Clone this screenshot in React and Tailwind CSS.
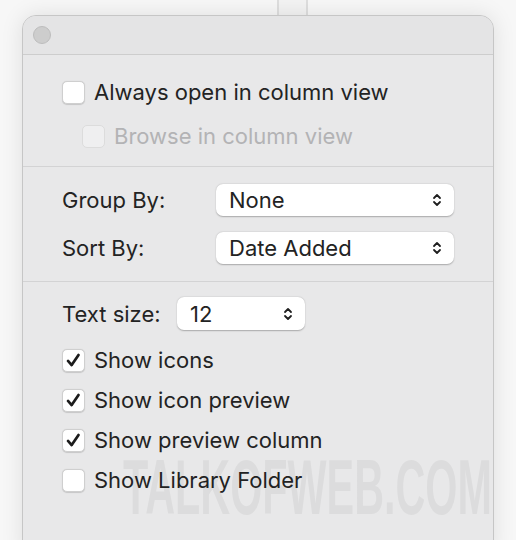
import React from "react";

const font = { fontFamily: "Inter, 'Noto Sans', sans-serif" };

function Chevrons() {
  return (
    <svg width="10" height="16" viewBox="0 0 10 16" fill="none">
      <path d="M2 6 L5 3 L8 6" stroke="#1f1f1f" strokeWidth="1.8" strokeLinecap="round" strokeLinejoin="round" />
      <path d="M2 10 L5 13 L8 10" stroke="#1f1f1f" strokeWidth="1.8" strokeLinecap="round" strokeLinejoin="round" />
    </svg>
  );
}

function Checkbox({ checked, disabled }) {
  return (
    <div
      className={
        "w-[23px] h-[23px] rounded-[5px] flex items-center justify-center shrink-0 " +
        (disabled
          ? "bg-[#efeff0] border border-[#dcdcdc]"
          : "bg-white border border-[#cfcfcf] shadow-[0_0.5px_1px_rgba(0,0,0,0.15)]")
      }
    >
      {checked && (
        <svg width="23" height="23" viewBox="0 0 23 23" fill="none">
          <path d="M5.5 12 L9.5 16.5 L17 5.5" stroke="#1c1c1c" strokeWidth="3" strokeLinecap="round" strokeLinejoin="round" />
        </svg>
      )}
    </div>
  );
}

function CheckRow({ label, checked, disabled, className = "" }) {
  return (
    <div className={"flex items-center h-[24px] " + className}>
      <Checkbox checked={checked} disabled={disabled} />
      <span className={"ml-[9px] text-[22px] leading-none " + (disabled ? "text-[#b3b3b5]" : "text-[#232323]")}>
        {label}
      </span>
    </div>
  );
}

function Select({ value, className = "" }) {
  return (
    <div
      className={
        "bg-white rounded-[7px] flex items-center justify-between pl-[13px] pr-[12px] shadow-[0_0.5px_1.5px_rgba(0,0,0,0.28)] " +
        className
      }
    >
      <span className="text-[22px] leading-none text-[#232323]">{value}</span>
      <Chevrons />
    </div>
  );
}

export default function App() {
  return (
    <div className="relative w-[516px] h-[540px] overflow-hidden bg-[#f7f7f7]" style={font}>
      <div className="h-[15px] flex">
        <div className="ml-[277px] w-[31px] h-full border-x-2 border-[#dedede] bg-[#f3f3f3]" />
      </div>
      <div className="relative ml-[22px] w-[472px] h-[540px] rounded-t-[14px] border border-[#c6c6c6] bg-[#e8e8e9] shadow-[0_0_22px_rgba(0,0,0,0.10)]">
        <div className="h-[39px] rounded-t-[13px] bg-[#e4e4e5] border-b border-[#cdcdcd] flex items-center pl-[10px]">
          <div className="w-[18px] h-[18px] rounded-full bg-[#cdcdcd] border border-[#bdbdbd]" />
        </div>
        <div className="pl-[39px] pt-[25px] pb-[18px] border-b border-[#d3d3d4]">
          <CheckRow label="Always open in column view" />
          <CheckRow label="Browse in column view" disabled className="ml-[20px] mt-[20px]" />
        </div>
        <div className="pl-[39px] pt-[17px] pb-[17px] border-b border-[#d3d3d4]">
          <div className="flex items-center">
            <span className="w-[154px] text-[22px] leading-none text-[#232323]">Group By:</span>
            <Select value="None" className="w-[238px] h-[32px]" />
          </div>
          <div className="flex items-center mt-[16px]">
            <span className="w-[154px] text-[22px] leading-none text-[#232323]">Sort By:</span>
            <Select value="Date Added" className="w-[238px] h-[32px]" />
          </div>
        </div>
        <div className="pl-[39px] pt-[15px]">
          <div className="flex items-center">
            <span className="w-[115px] text-[22px] leading-none text-[#232323]">Text size:</span>
            <Select value="12" className="w-[128px] h-[33px]" />
          </div>
          <CheckRow label="Show icons" checked className="mt-[18px]" />
          <CheckRow label="Show icon preview" checked className="mt-[16px]" />
          <CheckRow label="Show preview column" checked className="mt-[16px]" />
          <CheckRow label="Show Library Folder" className="mt-[16px]" />
        </div>
        <div
          className="absolute left-[100px] top-[432px] text-[78px] leading-none font-bold text-[rgba(0,0,0,0.05)] pointer-events-none whitespace-nowrap origin-left scale-x-[0.53]"
          style={{ fontFamily: "'Liberation Sans', sans-serif" }}
        >
          TALKOFWEB.COM
        </div>
      </div>
    </div>
  );
}
